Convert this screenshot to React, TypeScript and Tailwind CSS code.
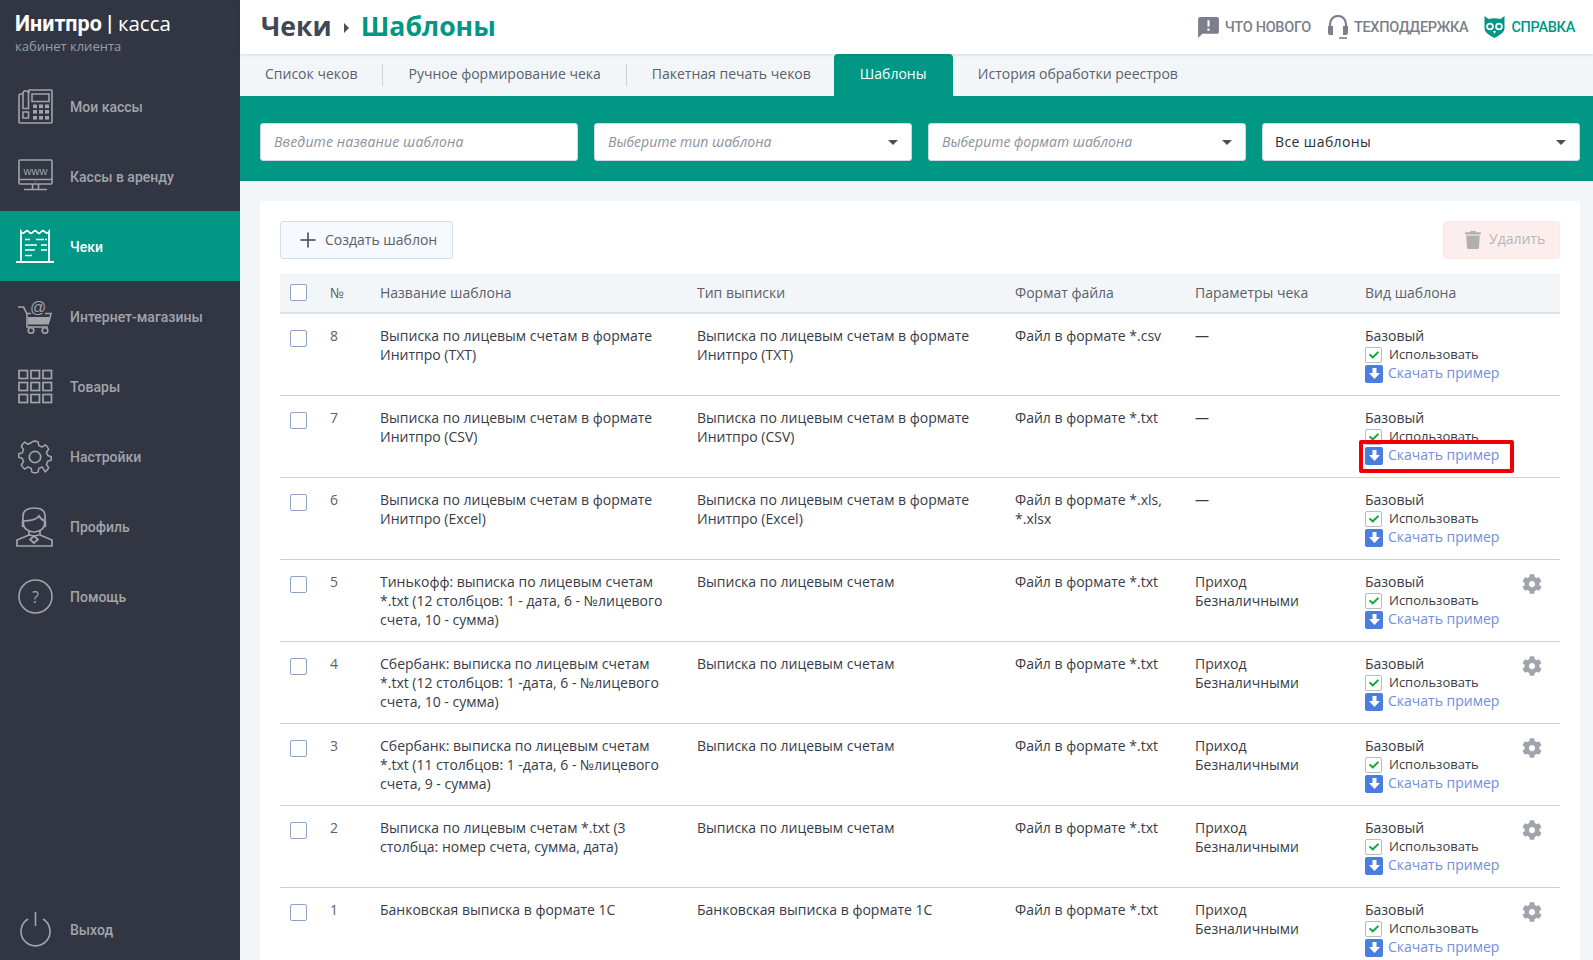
import React from "react";
import { Plus } from "lucide-react";
import { FaCog, FaTrash, FaCheck } from "react-icons/fa";
import { MdAnnouncement } from "react-icons/md";

const S = { fill: "none", stroke: "currentColor", strokeWidth: 1.6 } as const;

const IconPhone = () => (
  <svg width="36" height="36" viewBox="0 0 36 36" {...S}>
    <path d="M5 5H2.500a1.500 1.500 0 0 0-1.500 1.500V33a1 1 0 0 0 1 1h31a1 1 0 0 0 1-1V2a1 1 0 0 0-1-1H11v3" />
    <path d="M5 4.500v15h5.500v-15a2.700 2.700 0 0 0-5.500 0zM5 23h5.500v6H5z" />
    <path d="M14 5h17v7.500H14z" />
    {[15.5, 21, 27].map((y) => [15, 21, 27].map((x) => <rect key={`${x}${y}`} x={x} y={y} width="4" height="3.600" fill="currentColor" stroke="none" />))}
  </svg>
);
const IconWww = () => (
  <svg width="36" height="36" viewBox="0 0 36 36" {...S}>
    <rect x="1" y="1" width="33" height="24" rx="1" />
    <path d="M1 20.500h33M17.500 22.500v.7M14.500 25v5M20.500 25v5M6 30.500h23" />
    <text x="17.500" y="15.500" textAnchor="middle" fontFamily="'Liberation Sans',sans-serif" fontSize="11" fill="currentColor" stroke="none">www</text>
  </svg>
);
const IconReceipt = () => (
  <svg className="ml-[-2px]" width="40" height="36" viewBox="0 0 40 36" fill="none" stroke="currentColor" strokeWidth="1.800">
    <path d="M5 33V2.500q2 3 4 .5t4 0t4 0t4 0t4 0t4 0t4-.5V33" />
    <path d="M0 33h38" />
    <path d="M9 10.500h5M20 10.500h8M29 10.500h2M9 16h12M25 16h6M9 21h10M25 21h6M9 26.500h7" strokeWidth="1.500" />
  </svg>
);
const IconCart = () => (
  <svg width="36" height="36" viewBox="0 0 36 36" {...S}>
    <path d="M0 8h5.500L9 15v13h21" />
    <path d="M8 14.500h5M27 14.500h6l-2 8H10" />
    <rect x="10" y="18" width="21" height="7.500" fill="currentColor" stroke="none" />
    <circle cx="13" cy="31.500" r="2.800" />
    <circle cx="27" cy="31.500" r="2.800" />
    <text x="20" y="14" textAnchor="middle" fontFamily="'Liberation Sans',sans-serif" fontSize="16" fill="currentColor" stroke="none">@</text>
  </svg>
);
const IconGrid = () => (
  <svg width="36" height="36" viewBox="0 0 36 36" {...S} strokeWidth="1.700">
    {[1.500, 13.500, 25.500].map((y) => [1, 13, 25].map((x) => <rect key={`${x}${y}`} x={x} y={y} width="8.500" height="8" />))}
  </svg>
);
const IconGear = () => (
  <svg className="ml-[-1px]" width="36" height="36" viewBox="0 0 24 24" fill="none" stroke="currentColor" strokeWidth="1.100" strokeLinejoin="round">
    <path d="M9.800 1.500Q12 .5 14.200 1.500l.5 2.700 2.300 1 2.300-1.500q1.700 1.300 2.400 3l-1.600 2.200.9 2.300 2.500.8q0 2.200 0 2.500l-2.500.8-.9 2.300 1.600 2.200q-.7 1.700-2.400 3L17 19.300l-2.300 1-.5 2.700Q12 24 9.800 23l-.5-2.700-2.300-1-2.300 1.500q-1.700-1.300-2.400-3l1.600-2.200-.9-2.300L.5 12.500q0-.3 0-2.500l2.500-.8.9-2.300L2.300 4.700q.7-1.700 2.400-3L7 3.200l2.300-1z" transform="translate(12 12) scale(.94) translate(-12 -12.250)" />
    <circle cx="12" cy="12" r="3.800" />
  </svg>
);
const IconUser = () => (
  <svg className="ml-[-3px]" width="38" height="40" viewBox="0 0 38 40" {...S} strokeWidth="1.700">
    <path d="M8 16V9c0-5 4-8 11-8s11 3 11 8v7c0 5-5 9-11 9S8 21 8 16z" />
    <path d="M8 14c7 0 13-1 16-5 1 2 3 4 6 5" />
    <path d="M8 14v6M30 14v6" strokeWidth="2.500" />
    <path d="M14 24v4L2 33v6h35v-6l-12-5v-4" />
    <path d="M19 29l4 3.500-4 3.500-4-3.500z" />
    <path d="M14 28l5 1 5-1" />
  </svg>
);
const IconHelp = () => (
  <svg width="36" height="36" viewBox="0 0 36 36" {...S}>
    <circle cx="17.500" cy="17.500" r="16.500" />
    <text x="17.500" y="23.500" textAnchor="middle" fontFamily="'Open Sans',sans-serif" fontSize="16" fill="currentColor" stroke="none">?</text>
  </svg>
);
const IconPower = () => (
  <svg width="36" height="36" viewBox="0 0 36 36" {...S}>
    <path d="M17.500 0v14" />
    <path d="M10 7a14.500 14.500 0 1 0 15 0" />
  </svg>
);

const nav: [string, React.ReactNode, boolean?][] = [
  ["Мои кассы", <IconPhone />],
  ["Кассы в аренду", <IconWww />],
  ["Чеки", <IconReceipt />, true],
  ["Интернет-магазины", <IconCart />],
  ["Товары", <IconGrid />],
  ["Настройки", <IconGear />],
  ["Профиль", <IconUser />],
  ["Помощь", <IconHelp />],
];

const cols = "grid grid-cols-[50px_50px_317px_318px_180px_170px_1fr]";

const rows = [
  { n: 8, name: "Выписка по лицевым счетам в формате Инитпро (ТХТ)", type: "Выписка по лицевым счетам в формате Инитпро (ТХТ)", fmt: "Файл в формате *.csv", par: "—" },
  { n: 7, name: "Выписка по лицевым счетам в формате Инитпро (CSV)", type: "Выписка по лицевым счетам в формате Инитпро (CSV)", fmt: "Файл в формате *.txt", par: "—", mark: true },
  { n: 6, name: "Выписка по лицевым счетам в формате Инитпро (Excel)", type: "Выписка по лицевым счетам в формате Инитпро (Excel)", fmt: "Файл в формате *.xls, *.xlsx", par: "—" },
  { n: 5, name: "Тинькофф: выписка по лицевым счетам *.txt (12 столбцов: 1 - дата, 6 - №лицевого счета, 10 - сумма)", type: "Выписка по лицевым счетам", fmt: "Файл в формате *.txt", par: "Приход Безналичными", gear: true },
  { n: 4, name: "Сбербанк: выписка по лицевым счетам *.txt (12 столбцов: 1 -дата, 6 - №лицевого счета, 10 - сумма)", type: "Выписка по лицевым счетам", fmt: "Файл в формате *.txt", par: "Приход Безналичными", gear: true },
  { n: 3, name: "Сбербанк: выписка по лицевым счетам *.txt (11 столбцов: 1 -дата, 6 - №лицевого счета, 9 - сумма)", type: "Выписка по лицевым счетам", fmt: "Файл в формате *.txt", par: "Приход Безналичными", gear: true },
  { n: 2, name: "Выписка по лицевым счетам *.txt (3 столбца: номер счета, сумма, дата)", type: "Выписка по лицевым счетам", fmt: "Файл в формате *.txt", par: "Приход Безналичными", gear: true },
  { n: 1, name: "Банковская выписка в формате 1С", type: "Банковская выписка в формате 1С", fmt: "Файл в формате *.txt", par: "Приход Безналичными", gear: true },
];

const Box = () => <span className="block w-[17px] h-[17px] rounded-[2px] border border-[#8fa3c4] bg-white" />;

const Caret = () => <span className="mt-[2px] w-0 h-0 border-x-[5px] border-x-transparent border-t-[5px] border-t-[#4a4e5c]" />;

const Tab = ({ label, active }: { label: string; active?: boolean }) => (
  <div className={`h-[42px] flex items-center pb-[3px] ${active ? "pl-[26px] pr-[25px] ml-[-2px] w-[119px] bg-[#009785] text-white rounded-t-[4px]" : "px-[25px] text-[#5b5f6b]"}`}>
    {label}
  </div>
);

const Sep = () => <span className="w-px h-[22px] mb-[10px] bg-[#cdd3dc]" />;

export default function App() {
  return (
    <div className="flex h-screen overflow-hidden bg-[#f3f6f9] font-['Open_Sans',sans-serif] text-[14px] leading-[19px] text-[#373b47]">
      <aside className="w-[240px] shrink-0 flex flex-col bg-[#323643] text-[#a2a4aa] font-['Roboto',sans-serif]">
        <div className="h-[71px] pl-[15px] pt-[10px]">
          <div className="text-[20.5px] leading-[26px] text-white font-['Open_Sans',sans-serif]"><b className="font-bold font-['Roboto',sans-serif] text-[21.5px]">Инитпро | </b><span className="font-normal">касса</span></div>
          <div className="text-[13px] leading-[18px] text-[#9a9da5] font-['Open_Sans',sans-serif]">кабинет клиента</div>
        </div>
        <nav className="flex flex-col">
          {nav.map(([label, icon, active]) => (
            <div key={label} className={`h-[70px] flex items-center pl-[18px] pt-[2px] ${active ? "bg-[#009785] text-white" : ""}`}>
              <span className="w-[52px] shrink-0 flex">{icon}</span>
              <span className="text-[14px] font-medium">{label}</span>
            </div>
          ))}
        </nav>
        <div className="mt-auto h-[60px] flex items-center pl-[18px]">
          <span className="w-[52px] shrink-0 flex"><IconPower /></span>
          <span className="text-[14px] font-medium">Выход</span>
        </div>
      </aside>

      <main className="flex-1 min-w-0 flex flex-col">
        <header className="h-[54px] shrink-0 bg-white shadow-[0_1px_3px_rgba(0,0,0,.12)] flex items-center pl-[21px] pr-[18px] relative">
          <div className="flex items-center pb-[2px] text-[26.6px] leading-[36px] font-bold">
            <span className="text-[#434655]">Чеки</span>
            <span className="ml-[12px] mr-[12px] mt-[4px] w-0 h-0 border-y-[5px] border-y-transparent border-l-[5px] border-l-[#4a4e5c]" />
            <span className="text-[#009785]">Шаблоны</span>
          </div>
          <div className="ml-auto flex items-center font-['Roboto',sans-serif] font-medium text-[14.5px] uppercase text-[#7b7f8b] tracking-[-.3px]">
            <MdAnnouncement className="text-[25px] mr-[4px]" />
            <span>Что нового</span>
            <svg className="ml-[16px] mr-[5px]" width="22" height="24" viewBox="0 0 22 24" fill="none">
              <path d="M3 13V9a8 8 0 0 1 16 0v4" stroke="currentColor" strokeWidth="2.200" />
              <path d="M1 11h5v9H3a2 2 0 0 1-2-2zM21 11h-5v9h3a2 2 0 0 0 2-2z" fill="currentColor" />
              <path d="M12 23h8" stroke="currentColor" strokeWidth="1.600" />
            </svg>
            <span>Техподдержка</span>
            <svg className="ml-[15px] mr-[5px] text-[#009785]" width="23" height="22" viewBox="0 0 22 22">
              <path d="M1 0l4 3q6-1.500 12 0l4-3v12c0 5-5 7-10 10C6 19 1 17 1 12z" fill="currentColor" />
              <circle cx="6.500" cy="10.500" r="3.800" fill="#fff" />
              <circle cx="15.500" cy="10.500" r="3.800" fill="#fff" />
              <circle cx="6.500" cy="10.500" r="2" fill="currentColor" />
              <circle cx="15.500" cy="10.500" r="2" fill="currentColor" />
              <path d="M9.500 15h3L11 18z" fill="#fff" />
            </svg>
            <span className="text-[#009785]">Справка</span>
          </div>
        </header>

        <div className="h-[42px] shrink-0 flex items-end">
          <Tab label="Список чеков" />
          <Sep />
          <Tab label="Ручное формирование чека" />
          <Sep />
          <Tab label="Пакетная печать чеков" />
          <Tab label="Шаблоны" active />
          <Tab label="История обработки реестров" />
        </div>

        <div className="h-[85px] shrink-0 bg-[#009785] pl-[20px] pr-[13px] pt-[27px] grid grid-cols-4 gap-[16px]">
          <div className="h-[38px] rounded-[3px] bg-white border border-[#cfd6e4] px-[13px] pb-[2px] flex items-center italic tracking-[.15px] text-[#8d909a]">Введите название шаблона</div>
          <div className="h-[38px] rounded-[3px] bg-white border border-[#cfd6e4] px-[13px] pb-[2px] flex items-center justify-between italic text-[#8d909a]">Выберите тип шаблона<Caret /></div>
          <div className="h-[38px] rounded-[3px] bg-white border border-[#cfd6e4] px-[13px] pb-[2px] flex items-center justify-between italic text-[#8d909a]">Выберите формат шаблона<Caret /></div>
          <div className="h-[38px] rounded-[3px] bg-white border border-[#cfd6e4] pl-[12px] pr-[13px] pb-[2px] flex items-center justify-between tracking-[.4px] text-[#2b2e38]">Все шаблоны<Caret /></div>
        </div>

        <div className="mt-[20px] ml-[20px] mr-[13px] flex-1 bg-white px-[20px] pt-[20px]">
          <div className="flex justify-between h-[38px]">
            <div className="w-[173px] rounded-[3px] border border-[#d5deee] bg-[#f6f9fd] flex items-center pl-[15px] pb-[2px] text-[#5b5f6b]">
              <Plus size={24} strokeWidth={1.500} className="text-[#3f4351] mr-[5px] mt-[2px]" />Создать шаблон
            </div>
            <div className="w-[117px] rounded-[3px] border border-[#fbe9e9] bg-[#fdeeee] flex items-center pl-[20px] pb-[4px] text-[#b6b6b6]">
              <FaTrash size={18} className="text-[#b0b0b0] mr-[7px] mt-[4px]" />Удалить
            </div>
          </div>

          <div className={`${cols} mt-[15px] h-[40px] items-center bg-[#f3f6f9] border-b-2 border-[#dde1e6] pb-[2px] text-[#5b5f6b]`}>
            <div className="pl-[10px]"><Box /></div>
            <div>№</div>
            <div>Название шаблона</div>
            <div>Тип выписки</div>
            <div>Формат файла</div>
            <div>Параметры чека</div>
            <div>Вид шаблона</div>
          </div>

          {rows.map((r) => (
            <div key={r.n} className={`${cols} h-[82px] border-b border-[#ccd3dd] pt-[12px]`}>
              <div className="pl-[10px] pt-[4px]"><Box /></div>
              <div className="text-[#5b5f6b]">{r.n}</div>
              <div className="pr-[20px]">{r.name}</div>
              <div className="pr-[20px]">{r.type}</div>
              <div className="pr-[20px]">{r.fmt}</div>
              <div className="pr-[20px]">{r.par}</div>
              <div className="relative">
                <div>Базовый</div>
                <div className="flex items-center h-[19px] text-[13px]">
                  <span className="w-[17px] h-[16px] mr-[7px] rounded-[2px] border border-[#b5bcc9] flex items-center justify-center"><FaCheck size={10} className="text-[#10a83e]" /></span>
                  Использовать
                </div>
                <div className="flex items-center h-[19px] text-[#6f8fe0] relative z-10">
                  <span className="w-[18px] h-[18px] mr-[5px] rounded-[2px] bg-[#4a7de0] flex items-center justify-center">
                    <svg width="11" height="11" viewBox="0 0 11 11"><path d="M3.500 0h4v5H11L5.500 11 0 5h3.500z" fill="#fff" /></svg>
                  </span>
                  <span className="pb-[2px]">Скачать пример</span>
                </div>
                {r.gear ? <FaCog size={20} className="absolute left-[157px] top-[2px] text-[#a0a4ac]" /> : null}
                {r.mark ? <div className="absolute z-20 left-[-6px] top-[32px] w-[155px] h-[33px] border-[4px] border-[#f00000] rounded-[2px]" /> : null}
              </div>
            </div>
          ))}
        </div>
      </main>
    </div>
  );
}
